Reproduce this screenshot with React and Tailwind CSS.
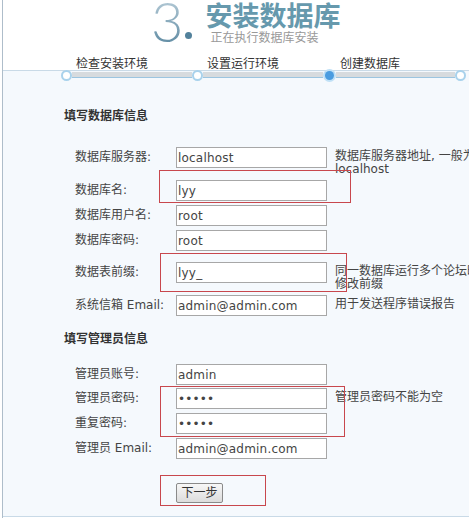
const dbRows = [
  { label: '数据库服务器:', value: 'localhost', h: 'h-[33px]', hint: ['数据库服务器地址, 一般为', 'localhost'] },
  { label: '数据库名:', value: 'lyy', h: 'h-[25px]' },
  { label: '数据库用户名:', value: 'root', h: 'h-[25px]' },
  { label: '数据库密码:', value: 'root', h: 'h-[32px]' },
  { label: '数据表前缀:', value: 'lyy_', h: 'h-[33px]', hint: ['同一数据库运行多个论坛时，请', '修改前缀'] },
  { label: '系统信箱 Email:', value: 'admin@admin.com', h: 'h-[21px]', hint: ['用于发送程序错误报告'] },
];

const adminRows = [
  { label: '管理员账号:', value: 'admin', h: 'h-[24px]' },
  { label: '管理员密码:', value: 'admin', h: 'h-[25px]', type: 'password', hint: ['管理员密码不能为空'] },
  { label: '重复密码:', value: 'admin', h: 'h-[25px]', type: 'password' },
  { label: '管理员 Email:', value: 'admin@admin.com', h: 'h-[21px]' },
];

const steps = ['检查安装环境', '设置运行环境', '创建数据库'];

// red annotation frames drawn over the form
const marks = [
  'left-[159px] top-[170px] w-[192px] h-[33px]',
  'left-[160px] top-[253px] w-[187px] h-[39px]',
  'left-[160px] top-[386px] w-[185px] h-[51px]',
  'left-[160px] top-[475px] w-[106px] h-[31px]',
];

const FormRow = ({ row }) => (
  <div className={`flex items-start pl-[72px] ${row.h}`}>
    <div className="w-[101px] shrink-0 h-[21px] leading-[21px] text-[#444] whitespace-nowrap">{row.label}</div>
    <input
      type={row.type || 'text'}
      defaultValue={row.value}
      readOnly
      className="w-[151px] shrink-0 h-[21px] border border-[#a7a7a7] bg-white px-[1px] text-[12px] text-[#444] outline-none tracking-[0.2px]"
    />
    {row.hint && (
      <div className="ml-[8px] shrink-0 mt-[3px] leading-[13px] text-[#444] whitespace-nowrap">
        {row.hint.map((line, i) => (
          <div key={i}>{line}</div>
        ))}
      </div>
    )}
  </div>
);

const Circle = ({ active }) =>
  active ? (
    <div className="-mt-[2px] w-[13px] h-[13px] rounded-full bg-[#bfe0f6] flex items-center justify-center shrink-0">
      <div className="w-[9px] h-[9px] rounded-full bg-[#4a9ce0]" />
    </div>
  ) : (
    <div className="-mt-[1px] w-[11px] h-[11px] rounded-full border-2 border-[#a9d2ec] bg-white shrink-0" />
  );

export default function App() {
  return (
    <div className="relative w-[469px] h-[518px] overflow-hidden bg-white font-['DejaVu_Sans','Noto_Sans_CJK_SC',sans-serif] text-[12px]">
      <div className="ml-[2px] h-full border-l border-[#aebdca]">
        {/* header */}
        <div className="h-[70px] flex flex-col">
          <div className="flex items-start ml-[148px]">
            <span className="font-['Lato','DejaVu_Sans',sans-serif] font-light text-[56px] leading-[60px] -mt-[9px] bg-gradient-to-b from-[#c3d5df] to-[#55849d] bg-clip-text text-transparent">
              3
            </span>
            <span className="w-[7px] h-[7px] rounded-full bg-[#52819b] mt-[32px] ml-[2px]" />
            <div className="ml-[13px] flex flex-col">
              <div className="font-['Noto_Sans_CJK_SC',sans-serif] font-bold text-[27px] leading-[30px] text-[#6699ad]">
                安装数据库
              </div>
              <div className="mt-[2px] ml-[5px] text-[12px] leading-[12px] text-[#999]">正在执行数据库安装</div>
            </div>
          </div>
          <div className="mt-auto ml-[58px] grid grid-cols-[131px_133px_130px] text-[#333] leading-[12px]">
            {steps.map((s) => (
              <div key={s} className="pl-[15px] whitespace-nowrap">{s}</div>
            ))}
          </div>
        </div>

        {/* body */}
        <div className="h-[447px] border-t border-b border-[#c9dae7] bg-[#f5f9fd]">
          <div className="ml-[58px] flex items-start">
            <Circle />
            <div className="mt-[1px] w-[120px] h-[6px] bg-[#d7dbde] border-b border-[#9cc5e0]" />
            <Circle />
            <div className="mt-[1px] w-[120px] h-[6px] bg-[#d7dbde] border-b border-[#9cc5e0]" />
            <Circle active />
            <div className="mt-[1px] w-[119px] h-[6px] bg-[#d7dbde] border-b border-[#9cc5e0]" />
            <Circle />
          </div>

          <div className="mt-[26px] pl-[61px] font-bold leading-[16px] text-[#333]">填写数据库信息</div>
          <div className="mt-[23px]">
            {dbRows.map((r) => (
              <FormRow key={r.label} row={r} />
            ))}
          </div>

          <div className="mt-[15px] pl-[61px] font-bold leading-[16px] text-[#333]">填写管理员信息</div>
          <div className="mt-[17px]">
            {adminRows.map((r) => (
              <FormRow key={r.label} row={r} />
            ))}
          </div>

          <div className="mt-[24px] pl-[173px]">
            <button className="w-[47px] h-[20px] rounded-[2px] border border-[#8a8a8a] bg-gradient-to-b from-[#f7f7f7] to-[#dcdcdc] text-[12px] text-[#333] leading-[18px]">
              下一步
            </button>
          </div>
        </div>
      </div>

      {marks.map((m) => (
        <div key={m} className={`absolute border border-[#c8474d] ${m}`} />
      ))}
    </div>
  );
}
